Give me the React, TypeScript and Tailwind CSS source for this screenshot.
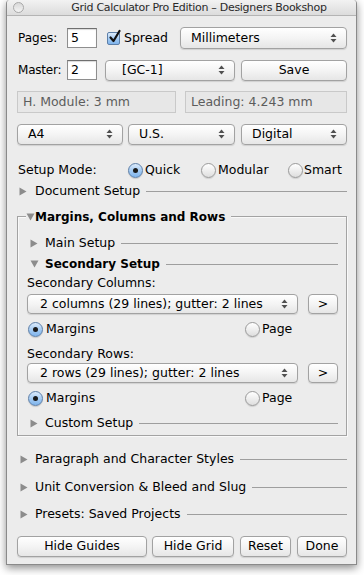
import React from "react";

const font = { fontFamily: '"DejaVu Sans", "Liberation Sans", sans-serif' };

function Arrows() {
  return (
    <svg width="7" height="10" viewBox="0 0 7 10" className="shrink-0">
      <path d="M3.5 0.5 L6.5 4 L0.5 4 Z" fill="#505050" />
      <path d="M3.5 9.5 L6.5 6 L0.5 6 Z" fill="#505050" />
    </svg>
  );
}

function PopUp({ label, className = "" }: { label: string; className?: string }) {
  return (
    <div
      className={
        "flex items-center justify-between rounded-[4px] border border-[#a2a2a2] bg-linear-to-b from-[#ffffff] via-[#f4f4f4] to-[#e6e6e6] pl-[10px] pr-[9px] text-[12.5px] text-black shadow-[0_1px_1px_rgba(0,0,0,0.12)] " +
        className
      }
    >
      <span className="whitespace-nowrap">{label}</span>
      <Arrows />
    </div>
  );
}

function Btn({ label, className = "" }: { label: string; className?: string }) {
  return (
    <div
      className={
        "flex items-center justify-center rounded-[4px] border border-[#a2a2a2] bg-linear-to-b from-[#ffffff] via-[#f4f4f4] to-[#e6e6e6] text-[12.5px] text-black shadow-[0_1px_1px_rgba(0,0,0,0.12)] " +
        className
      }
    >
      {label}
    </div>
  );
}

function Radio({ on }: { on?: boolean }) {
  return on ? (
    <div className="flex h-[15px] w-[15px] shrink-0 items-center justify-center rounded-full border border-[#5d7fa8] bg-linear-to-b from-[#dcebfb] via-[#a6ccf3] to-[#7fb4ec] shadow-[0_1px_1px_rgba(0,0,0,0.15)]">
      <div className="h-[5px] w-[5px] rounded-full bg-[#1a1a1a]" />
    </div>
  ) : (
    <div className="h-[15px] w-[15px] shrink-0 rounded-full border border-[#9a9a9a] bg-linear-to-b from-[#ffffff] to-[#dedede] shadow-[0_1px_1px_rgba(0,0,0,0.12)]" />
  );
}

function TriRight() {
  return (
    <svg width="8" height="9" viewBox="0 0 8 9" className="shrink-0">
      <path d="M0.5 0.5 L7.5 4.5 L0.5 8.5 Z" fill="#8c8c8c" />
    </svg>
  );
}
function TriDown() {
  return (
    <svg width="9" height="8" viewBox="0 0 9 8" className="shrink-0">
      <path d="M0.5 0.5 L8.5 0.5 L4.5 7.5 Z" fill="#8c8c8c" />
    </svg>
  );
}

function Disclosure({
  label,
  open,
  bold,
  triX,
  textX,
  className = "",
}: {
  label: string;
  open?: boolean;
  bold?: boolean;
  triX: number;
  textX: number;
  className?: string;
}) {
  return (
    <div className={"flex items-center " + className}>
      <div style={{ width: triX }} className="shrink-0" />
      {open ? <TriDown /> : <TriRight />}
      <div style={{ width: textX - triX - (open ? 9 : 8) }} className="shrink-0" />
      <span className={"whitespace-nowrap text-black " + (bold ? "text-[12px] font-bold" : "text-[12.5px]")}>{label}</span>
      <div className="ml-[6px] h-px flex-1 bg-[#9e9e9e]" />
    </div>
  );
}

function Field({ value }: { value: string }) {
  return (
    <div className="flex h-[20px] w-[30px] items-center border border-[#8e8e8e] border-t-[#6f6f6f] bg-white pl-[3px] text-[12.5px] text-black shadow-[inset_0_1px_1px_rgba(0,0,0,0.15)]">
      {value}
    </div>
  );
}

export default function App() {
  return (
    <div className="relative h-[575px] w-[364px] overflow-hidden bg-white" style={font}>
      <div className="ml-[6px] flex h-[565px] w-[351px] flex-col overflow-hidden rounded-t-[4px] border-x border-b border-[#8a8a8a] bg-[#ececec] shadow-[0_3px_9px_rgba(0,0,0,0.45)]">
        {/* title bar */}
        <div className="relative flex h-[16px] shrink-0 items-center border-b border-[#b4b4b4] bg-linear-to-b from-[#f2f2f2] to-[#dcdcdc]">
          <div className="absolute left-[6px] top-[2px] h-[11px] w-[11px] rounded-full border border-[#a8a8a8] bg-linear-to-b from-[#d8d8d8] to-[#f4f4f4]" />
          <div className="w-full whitespace-nowrap pl-[35px] text-center text-[11px] leading-none tracking-[-0.3px] text-[#2a2a2a]">
            Grid Calculator Pro Edition – Designers Bookshop
          </div>
        </div>

        <div className="flex flex-col pl-[11px] pr-[9px]">
          {/* Row 1 */}
          <div className="mt-[11px] flex h-[22px] items-center">
            <span className="w-[49px] text-[12px]">Pages:</span>
            <Field value="5" />
            <div className="ml-[10px] flex items-center">
              <div className="relative h-[13px] w-[13px] rounded-[2px] border border-[#5d7fa8] bg-linear-to-b from-[#dcebfb] via-[#a6ccf3] to-[#7fb4ec]">
                <svg width="14" height="15" viewBox="0 0 14 15" className="absolute left-[0px] top-[-4px]">
                  <path d="M2.5 8.5 L5.5 12 L11.5 2" stroke="#111" strokeWidth="2.2" fill="none" strokeLinecap="round" strokeLinejoin="round" />
                </svg>
              </div>
              <span className="ml-[4px] text-[12.5px]">Spread</span>
            </div>
            <PopUp label="Millimeters" className="ml-auto h-[22px] w-[167px]" />
          </div>

          {/* Row 2 */}
          <div className="mt-[10px] flex h-[22px] items-center">
            <span className="w-[49px] text-[12px] tracking-[-0.2px]">Master:</span>
            <Field value="2" />
            <PopUp label="[GC-1]" className="ml-[8px] h-[21px] w-[130px] pl-[16px]" />
            <Btn label="Save" className="ml-auto h-[21px] w-[106px]" />
          </div>

          {/* Row 3 */}
          <div className="mt-[10px] flex h-[22px] items-center justify-between">
            <div className="ml-[-1px] flex h-[22px] w-[159px] items-center border border-[#c9c9c9] bg-[#e7e7e7] pl-[5px] text-[12.5px] text-[#5c5c5c]">
              H. Module: 3 mm
            </div>
            <div className="flex h-[22px] w-[162px] items-center border border-[#c9c9c9] bg-[#e7e7e7] pl-[5px] text-[12.5px] text-[#5c5c5c]">
              Leading: 4.243 mm
            </div>
          </div>

          {/* Row 4 */}
          <div className="mt-[10px] flex h-[22px] items-center">
            <PopUp label="A4" className="ml-[-1px] h-[21px] w-[106px]" />
            <PopUp label="U.S." className="ml-[5px] h-[21px] w-[107px]" />
            <PopUp label="Digital" className="ml-auto h-[21px] w-[106px]" />
          </div>

          {/* Setup mode */}
          <div className="mt-[15px] flex h-[20px] items-center text-[12.5px]">
            <span className="w-[110px]">Setup Mode:</span>
            <Radio on />
            <span className="ml-[2px] w-[56px]">Quick</span>
            <Radio />
            <span className="ml-[2px] w-[70px]">Modular</span>
            <Radio />
            <span className="ml-[1px]">Smart</span>
          </div>

          {/* Document setup */}
          <Disclosure label="Document Setup" triX={1} textX={17} className="mt-[2px] h-[18px]" />

          {/* Group box */}
          <div className="relative ml-[-1px] mt-[16px] h-[220px] w-[330px] border border-[#a3a3a3] shadow-[inset_1px_1px_0_rgba(255,255,255,0.7),1px_1px_0_rgba(255,255,255,0.7)]">
            <div className="absolute left-[8px] top-[-9px] flex items-center bg-[#ececec] pr-[6px]">
              <TriDown />
              <span className="text-[12px] font-bold">Margins, Columns and Rows</span>
            </div>
            <div className="flex flex-col pl-[9px] pr-[8px] pt-[17px]">
              <Disclosure label="Main Setup" triX={3} textX={18} className="h-[18px]" />
              <Disclosure label="Secondary Setup" open bold triX={3} textX={18} className="mt-[3px] h-[18px]" />
              <div className="mt-[1px] flex h-[18px] items-center text-[12.5px]">Secondary Columns:</div>
              <div className="mt-[2px] flex h-[20px] items-center">
                <PopUp label="2 columns (29 lines); gutter: 2 lines" className="h-[20px] w-[271px] pl-[12px]" />
                <Btn label=">" className="ml-auto h-[20px] w-[30px]" />
              </div>
              <div className="mt-[6px] flex h-[18px] items-center text-[12.5px]">
                <div className="ml-[1px]" />
                <Radio on />
                <span className="ml-[3px] w-[199px]">Margins</span>
                <Radio />
                <span className="ml-[2px]">Page</span>
              </div>
              <div className="mt-[7px] flex h-[18px] items-center text-[12.5px]">Secondary Rows:</div>
              <div className="mt-[0px] flex h-[20px] items-center">
                <PopUp label="2 rows (29 lines); gutter: 2 lines" className="h-[20px] w-[271px] pl-[12px]" />
                <Btn label=">" className="ml-auto h-[20px] w-[30px]" />
              </div>
              <div className="mt-[6px] flex h-[18px] items-center text-[12.5px]">
                <div className="ml-[1px]" />
                <Radio on />
                <span className="ml-[3px] w-[199px]">Margins</span>
                <Radio />
                <span className="ml-[2px]">Page</span>
              </div>
              <Disclosure label="Custom Setup" triX={3} textX={18} className="mt-[7px] h-[18px]" />
            </div>
          </div>

          <Disclosure label="Paragraph and Character Styles" triX={2} textX={17} className="mt-[14px] h-[18px]" />
          <Disclosure label="Unit Conversion & Bleed and Slug" triX={2} textX={17} className="mt-[10px] h-[18px]" />
          <Disclosure label="Presets: Saved Projects" triX={2} textX={17} className="mt-[9px] h-[18px]" />

          {/* Buttons */}
          <div className="mt-[13px] flex h-[21px] items-center">
            <Btn label="Hide Guides" className="ml-[-1px] h-[21px] w-[130px]" />
            <Btn label="Hide Grid" className="ml-[5px] h-[21px] w-[82px]" />
            <Btn label="Reset" className="ml-[6px] h-[21px] w-[51px]" />
            <Btn label="Done" className="ml-auto h-[21px] w-[50px]" />
          </div>
        </div>
      </div>
    </div>
  );
}
